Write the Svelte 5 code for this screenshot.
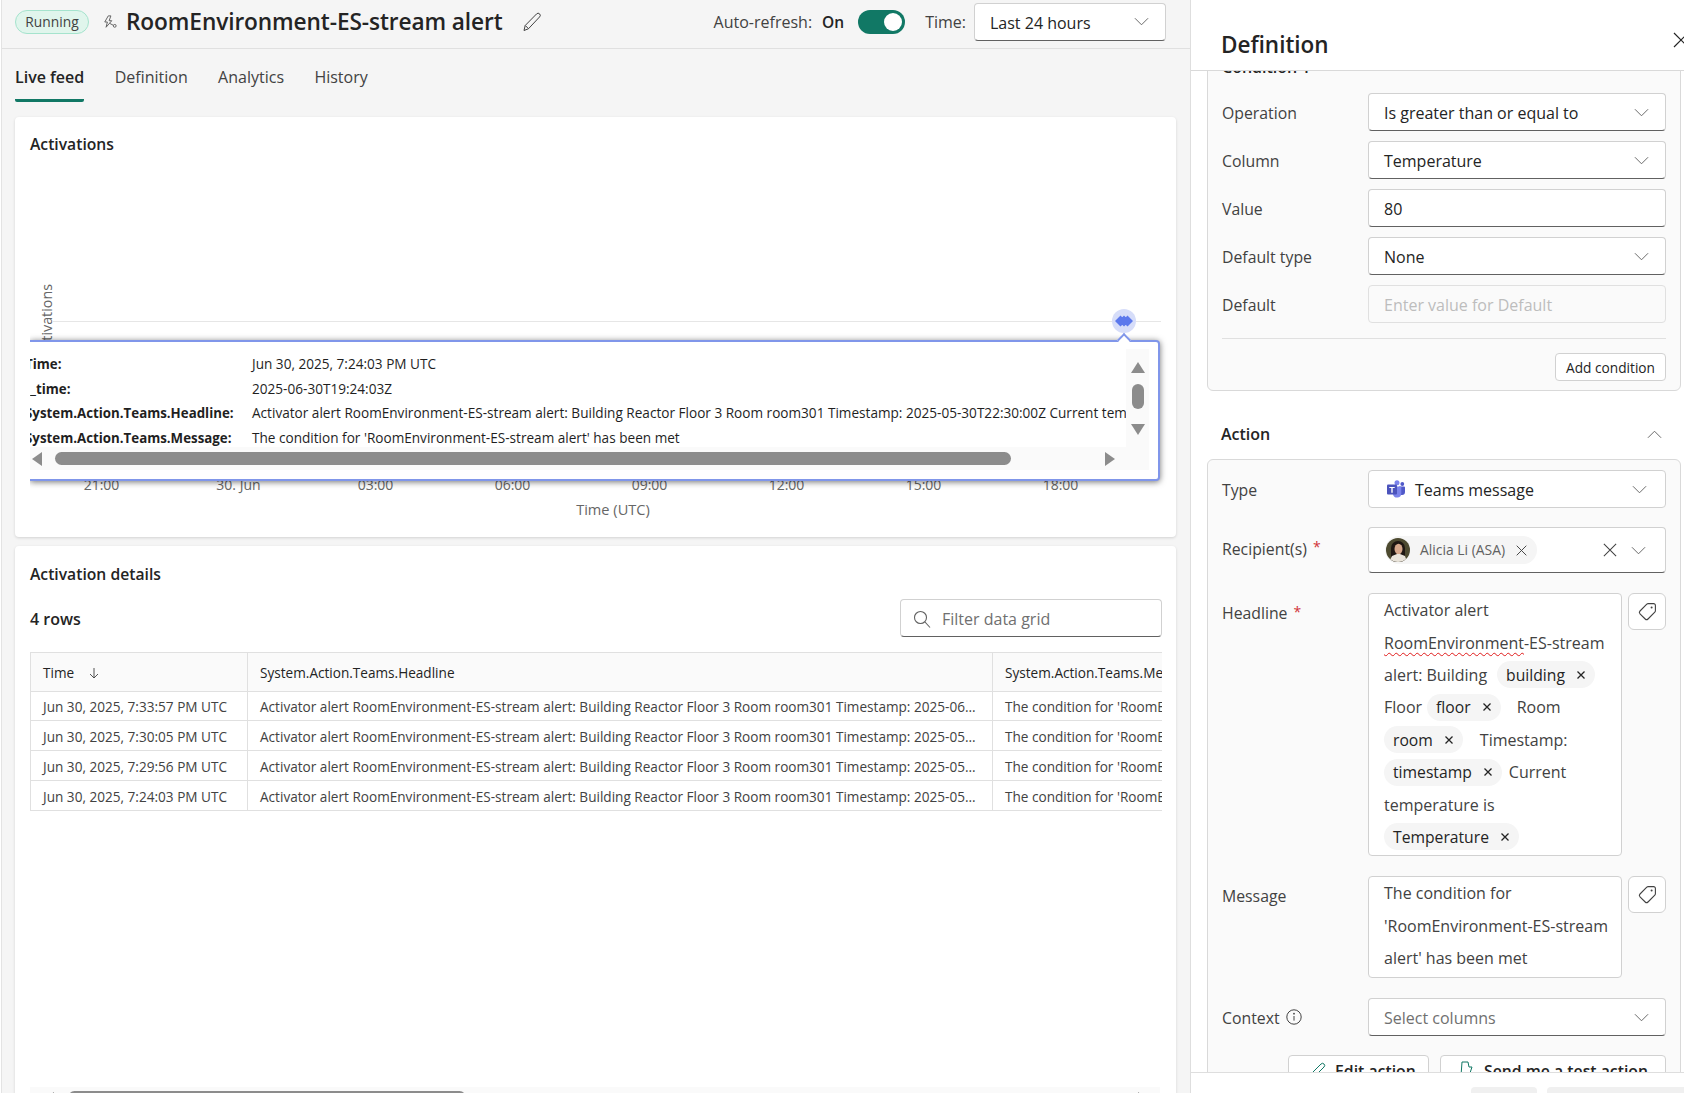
<script>
  const ticks = ['21:00', '30. Jun', '03:00', '06:00', '09:00', '12:00', '15:00', '18:00'];
  const tipRows = [
    ['Time:', 'Jun 30, 2025, 7:24:03 PM UTC'],
    ['__time:', '2025-06-30T19:24:03Z'],
    ['System.Action.Teams.Headline:', 'Activator alert RoomEnvironment-ES-stream alert: Building Reactor Floor 3 Room room301 Timestamp: 2025-05-30T22:30:00Z Current temperature is 82'],
    ['System.Action.Teams.Message:', "The condition for 'RoomEnvironment-ES-stream alert' has been met"]
  ];
  const prefix = 'Activator alert RoomEnvironment-ES-stream alert: Building Reactor Floor 3 Room room301 Timestamp: ';
  const rows = [
    ['Jun 30, 2025, 7:33:57 PM UTC', '2025-06...'],
    ['Jun 30, 2025, 7:30:05 PM UTC', '2025-05...'],
    ['Jun 30, 2025, 7:29:56 PM UTC', '2025-05...'],
    ['Jun 30, 2025, 7:24:03 PM UTC', '2025-05...']
  ];
</script>

{#snippet chevron()}
  <svg class="chev" viewBox="0 0 16 9" aria-hidden="true"><path d="M1 1l7 7 7-7" /></svg>
{/snippet}

{#snippet tag()}
  <button class="tagbtn" aria-label="Tag">
    <svg viewBox="0 0 20 20" aria-hidden="true">
      <path d="M11.2 1.6h5.4a1.8 1.8 0 0 1 1.8 1.8v5.4a2 2 0 0 1-.6 1.4l-6.8 6.8a2 2 0 0 1-2.8 0l-5.2-5.2a2 2 0 0 1 0-2.8l6.8-6.8a2 2 0 0 1 1.4-.6z" />
      <circle cx="14.6" cy="5.4" r="1" />
    </svg>
  </button>
{/snippet}

{#snippet x(cls)}
  <svg class={cls} viewBox="0 0 16 16" aria-hidden="true"><path d="M1 1l14 14M15 1L1 15" /></svg>
{/snippet}

{#snippet chip(name)}
  <span class="chip">{name}{@render x('chipx')}</span>
{/snippet}

<div class="page">
  <main class="main">
    <header class="head">
      <span class="pill">Running</span>
      <svg class="rule" viewBox="0 0 16 16" aria-hidden="true">
        <path d="M6 1L2 8h3L3.5 14 10 6.5H7L9 1z" />
        <circle cx="13.4" cy="12.4" r="1.6" />
        <path d="M7.5 9.5l4.4 2.3" />
      </svg>
      <h1>RoomEnvironment-ES-stream alert</h1>
      <svg class="pencil" viewBox="0 0 20 20" aria-hidden="true">
        <path d="M2 18.5l1.2-5L14.6 1.9a2.1 2.1 0 0 1 3 0 2.1 2.1 0 0 1 0 3L6.4 16.8z" />
        <path d="M3.4 13.6l3 3" />
      </svg>
      <div class="spacer"></div>
      <span class="hlabel">Auto-refresh:</span>
      <span class="on">On</span>
      <span class="toggle"><span class="knob"></span></span>
      <span class="hlabel time">Time:</span>
      <div class="field timepick"><span>Last 24 hours</span>{@render chevron()}</div>
    </header>

    <nav class="tabs">
      <span class="tab active">Live feed</span>
      <span class="tab">Definition</span>
      <span class="tab">Analytics</span>
      <span class="tab">History</span>
    </nav>

    <section class="card activations">
      <h2>Activations</h2>
      <span class="ylabel">Activations</span>
      <div class="gridline"></div>
      <div class="ticks">
        {#each ticks as t}<span>{t}</span>{/each}
      </div>
      <span class="xlabel">Time (UTC)</span>
      <div class="tip">
        <div class="tip-grid">
          <div class="tip-content">
            {#each tipRows as r}
              <div class="tip-row"><b>{r[0]}</b><span>{r[1]}</span></div>
            {/each}
          </div>
          <div class="vbar">
            <i class="tri up"></i>
            <i class="vthumb"></i>
            <i class="tri down"></i>
          </div>
          <div class="hbar">
            <i class="tri left"></i>
            <i class="hthumb"></i>
            <i class="tri right"></i>
          </div>
        </div>
      </div>
      <i class="tip-arrow"></i>
      <svg class="marker" viewBox="0 0 24 24" aria-hidden="true">
        <circle cx="12" cy="12" r="12" fill="#d6ddf9" />
        <path d="M3 12l5.5-5.5L14 12l-5.5 5.5zM6.5 12L12 6.5l5.5 5.5-5.5 5.5zM10 12l5.5-5.5L21 12l-5.5 5.5z" fill="#5b78ec" />
      </svg>
    </section>

    <section class="card details">
      <h2>Activation details</h2>
      <div class="toolbar">
        <span class="count">4 rows</span>
        <div class="filter">
          <svg viewBox="0 0 18 18" aria-hidden="true"><circle cx="7.5" cy="7.5" r="6" /><path d="M12 12l5 5.5" /></svg>
          <span>Filter data grid</span>
        </div>
      </div>
      <div class="table">
        <div class="tr thead">
          <div class="td">Time <svg class="sort" viewBox="0 0 12 12" aria-hidden="true"><path d="M6 1v10M2 7l4 4 4-4" /></svg></div>
          <div class="td">System.Action.Teams.Headline</div>
          <div class="td">System.Action.Teams.Message</div>
        </div>
        {#each rows as r}
          <div class="tr">
            <div class="td">{r[0]}</div>
            <div class="td">{prefix}{r[1]}</div>
            <div class="td">The condition for 'RoomEnvironment-ES-stream alert' has been met</div>
          </div>
        {/each}
      </div>
      <div class="bottombar"><i class="tri left small"></i><i class="bthumb"></i><i class="tri right small"></i></div>
    </section>
  </main>

  <aside class="panel">
    <div class="phead">
      <h2>Definition</h2>
      {@render x('pclose')}
    </div>
    <div class="pscroll">
      <div class="pinner">
        <section class="pcard cond">
          <div class="condlabel">Condition 1</div>
          <div class="rows">
            <div class="row"><label>Operation</label><div class="field"><span>Is greater than or equal to</span>{@render chevron()}</div></div>
            <div class="row"><label>Column</label><div class="field"><span>Temperature</span>{@render chevron()}</div></div>
            <div class="row"><label>Value</label><div class="field"><span>80</span></div></div>
            <div class="row"><label>Default type</label><div class="field"><span>None</span>{@render chevron()}</div></div>
            <div class="row"><label>Default</label><div class="field disabled"><span>Enter value for Default</span></div></div>
          </div>
          <div class="sep"></div>
          <div class="addrow"><button class="add">Add condition</button></div>
        </section>

        <div class="acthead">
          <h3>Action</h3>
          <svg class="chev" viewBox="0 0 16 9" aria-hidden="true"><path d="M1 8l7-7 7 7" /></svg>
        </div>

        <section class="pcard action">
          <div class="row"><label>Type</label>
            <div class="field flat">
              <svg class="teams" viewBox="0 0 18 18" aria-hidden="true">
                <circle cx="10" cy="2.8" r="2.5" fill="#7b83eb" />
                <circle cx="15.3" cy="4" r="1.9" fill="#5059c9" />
                <path d="M12 6.5h5a1 1 0 0 1 1 1v4.6a3 3 0 0 1-3 3h-3z" fill="#5059c9" />
                <path d="M6 6.5h7.5a.8.8 0 0 1 .8.8v6.4a4.2 4.2 0 0 1-8.3.5z" fill="#7b83eb" />
                <rect x="0" y="4.6" width="10" height="10" rx="1" fill="#4b53bc" />
                <path d="M2.3 6.9h5.4v1.2h-2v4.6H4.3V8.1h-2z" fill="#fff" />
              </svg>
              <span class="teamstext">Teams message</span>{@render chevron()}
            </div>
          </div>
          <div class="row recip"><label>Recipient(s)<em>*</em></label>
            <div class="field tall">
              <span class="person">
                <svg class="avatar" viewBox="0 0 24 24" aria-hidden="true">
                  <defs><clipPath id="av"><circle cx="12" cy="12" r="12" /></clipPath></defs>
                  <g clip-path="url(#av)">
                    <rect width="24" height="24" fill="#4d4a30" />
                    <path d="M5 24V10a7 7 0 0 1 14 0v14z" fill="#1f1712" />
                    <ellipse cx="12.5" cy="11" rx="4" ry="5.2" fill="#d6a88c" />
                    <path d="M3 24l3-6 5-2h3l5 2 2 6z" fill="#e9e4da" />
                  </g>
                </svg>
                <span>Alicia Li (ASA)</span>
                {@render x('personx')}
              </span>
              {@render x('clear')}
              {@render chevron()}
            </div>
          </div>
          <div class="row"><label>Headline<em>*</em></label>
            <div class="rich headline">
              <div class="line">Activator alert</div>
              <div class="line"><span class="squig">RoomEnvironment</span>-ES-stream</div>
              <div class="line">alert: Building<span class="g10"></span>{@render chip('building')}</div>
              <div class="line">Floor<span class="g5"></span>{@render chip('floor')}<span class="g16"></span>Room</div>
              <div class="line">{@render chip('room')}<span class="g17"></span>Timestamp:</div>
              <div class="line">{@render chip('timestamp')}<span class="g7"></span>Current</div>
              <div class="line">temperature is</div>
              <div class="line">{@render chip('Temperature')}</div>
            </div>
            {@render tag()}
          </div>
          <div class="row"><label class="msg">Message</label>
            <div class="rich message">
              <div class="line">The condition for</div>
              <div class="line">'RoomEnvironment-ES-stream</div>
              <div class="line">alert' has been met</div>
            </div>
            {@render tag()}
          </div>
          <div class="row"><label>Context
            <svg class="info" viewBox="0 0 16 16" aria-hidden="true"><circle cx="8" cy="8" r="7.2" /><path d="M8 7v4.6" /><circle class="dot" cx="8" cy="4.7" r=".9" /></svg></label>
            <div class="field"><span class="ph">Select columns</span>{@render chevron()}</div>
          </div>
          <div class="btns">
            <button class="ghost edit">
              <svg viewBox="0 0 16 16" aria-hidden="true"><path d="M2 15l1-4 8-8a2 2 0 0 1 3 3l-8 8z" /></svg>
              Edit action
            </button>
            <button class="ghost send">
              <svg viewBox="0 0 16 16" aria-hidden="true"><path d="M3 1h6l1 5h3l-3 9H2z" /></svg>
              Send me a test action
            </button>
          </div>
        </section>
      </div>
    </div>
    <footer class="pfoot"><button class="fb one" aria-label="Action"></button><button class="fb two" aria-label="Action"></button></footer>
  </aside>
</div>

<style>
  :global(body) { margin: 0; background: #fff; }
  * { box-sizing: border-box; }
  .page {
    display: grid; grid-template-columns: 1190px 494px; width: 1684px; height: 1093px; overflow: hidden;
    font-family: "Open Sans", "Noto Sans", sans-serif; color: #242424; font-size: 16px;
  }
  h1, h2, h3 { margin: 0; }
  i { display: block; }

  .main {
    background: #f5f5f5; border-left: 1px solid #e3e3e3; margin-left: 1px; height: 1093px; overflow: hidden;
    display: flex; flex-direction: column;
  }
  .head {
    height: 49px; flex: none; display: flex; align-items: center; padding: 0 24px 5px 13px;
    border-bottom: 1px solid #e0e0e0;
  }
  .pill {
    width: 74px; height: 24px; border-radius: 12px; background: #e0f5ec; border: 1px solid #a5e3cd;
    font-size: 13.8px; color: #424242; display: flex; align-items: center; justify-content: center; flex: none;
  }
  .rule { width: 14px; height: 14px; margin-left: 14px; fill: none; stroke: #616161; stroke-width: 1.1; flex: none; }
  h1 { font-size: 22.66px; font-weight: 600; margin-left: 9px; white-space: nowrap; letter-spacing: -.1px; }
  .pencil { width: 20px; height: 20px; margin-left: 19px; fill: none; stroke: #424242; stroke-width: 1; flex: none; }
  .spacer { flex: 1; }
  .hlabel { font-size: 16px; color: #424242; white-space: nowrap; padding-top: 1px; }
  .on { font-size: 15.5px; font-weight: 600; margin-left: 10px; padding-top: 1px; }
  .toggle { width: 47px; height: 24px; border-radius: 12px; background: #117865; margin-left: 14px; padding: 3px 3px 3px 26px; flex: none; }
  .knob { display: block; width: 18px; height: 18px; border-radius: 50%; background: #fff; }
  .time { margin-left: 20px; margin-right: 8px; }

  .field {
    width: 298px; height: 38px; flex: none; background: #fff; border: 1px solid #d1d1d1; border-bottom-color: #616161;
    border-radius: 4px; display: flex; align-items: center; padding: 2px 16px 0 15px; font-size: 16px; color: #242424; white-space: nowrap;
  }
  .field > span:first-child { flex: 1; }
  .field > span.person:first-child { flex: none; }
  .timepick { width: 192px; }
  .chev { width: 15px; height: 9px; fill: none; stroke: #616161; stroke-width: 1; flex: none; }
  .field .chev { margin-top: -2px; }
  .flat { border-bottom-color: #d1d1d1; padding-right: 18px; }
  .disabled { background: #fafafa; border-color: #e0e0e0; color: #bdbdbd; }
  .tall { height: 46px; padding-left: 16px; padding-top: 0; }
  .tall .chev { margin-top: 0; }
  .ph { color: #707070; }

  .tabs { height: 53px; flex: none; display: flex; gap: 30.4px; padding-left: 13px; margin-bottom: 15px; }
  .tab { height: 53px; padding-top: 18px; font-size: 16px; color: #424242; line-height: 21px; }
  .active { color: #242424; font-weight: 600; border-bottom: 3px solid #117865; border-radius: 0 0 2px 2px; }

  .card {
    margin: 0 14px 9px 13px; background: #fff; border-radius: 4px; box-shadow: 0 1px 3px rgba(0,0,0,.14); position: relative; flex: none;
  }
  .card h2 { font-size: 15.7px; font-weight: 600; line-height: 22px; }
  .activations { height: 420px; padding: 16px 15px; }
  .ylabel {
    position: absolute; left: 22px; top: 166.5px; writing-mode: vertical-rl; transform: rotate(180deg);
    font-size: 14.3px; color: #666; line-height: 20px;
  }
  .gridline { position: absolute; left: 38px; top: 204px; width: 1108px; height: 1px; background: #e6e6e6; }
  .ticks { position: absolute; left: 18px; top: 359px; display: flex; }
  .ticks span { width: 137px; text-align: center; font-size: 14px; color: #666; line-height: 18px; }
  .xlabel { position: absolute; left: 540px; top: 382px; width: 116px; text-align: center; font-size: 14.6px; color: #666; line-height: 20px; white-space: nowrap; }
  .tip {
    position: absolute; left: 15px; top: 222.5px; width: 1130px; height: 141px; background: #fff;
    border: 2px solid #8096ea; border-left: 0; border-radius: 0 4px 4px 0; box-shadow: 0 1px 6px rgba(0,0,0,.55);
    clip-path: inset(-12px -12px -12px 0); padding: 7.5px 9px 7px 0;
  }
  .tip-grid { display: grid; grid-template-columns: 1096px 23px; grid-template-rows: 98px 23px; }
  .tip-content { overflow: hidden; padding-top: 3px; }
  .tip-row { display: flex; height: 24.6px; line-height: 24.6px; font-size: 13.6px; margin-left: -5px; white-space: nowrap; color: #1f1f1f; }
  .tip-row b { width: 227px; flex: none; font-weight: 700; font-size: 13.3px; }
  .vbar { background: #fafafa; display: flex; flex-direction: column; align-items: center; padding-top: 13px; }
  .vthumb { width: 12px; height: 25px; border-radius: 6px; background: #8c8c8c; margin-top: 11px; }
  .hbar { grid-column: 1 / 3; background: #fafafa; position: relative; display: flex; align-items: center; padding-left: 2px; }
  .hthumb { width: 956px; height: 13px; border-radius: 7px; background: #8c8c8c; margin-left: 13px; }
  .tri { width: 0; height: 0; border-style: solid; border-color: transparent; }
  .up { border-width: 0 7px 11px; border-bottom-color: #8c8c8c; }
  .down { border-width: 11px 7px 0; border-top-color: #8c8c8c; margin-top: 15px; }
  .left { border-width: 7px 10px 7px 0; border-right-color: #8c8c8c; }
  .right { border-width: 7px 0 7px 10px; border-left-color: #8c8c8c; margin-left: 94px; }
  .tip-arrow {
    position: absolute; left: 1104px; top: 217.5px; width: 10px; height: 10px; background: #fff; transform: rotate(45deg);
    border-top: 2px solid #8096ea; border-left: 2px solid #8096ea;
  }
  .marker { position: absolute; left: 1097px; top: 192px; width: 24px; height: 24px; }

  .details { height: 560px; padding: 17px 14px 0 15px; }
  .toolbar { display: flex; justify-content: space-between; align-items: center; margin-top: 14px; height: 38px; }
  .count { font-size: 16px; font-weight: 600; padding-top: 2px; }
  .filter {
    width: 262px; height: 38px; border: 1px solid #d1d1d1; border-bottom-color: #616161; border-radius: 4px;
    display: flex; align-items: center; padding: 1px 0 0 12px; gap: 11px; color: #707070; font-size: 16px;
  }
  .filter svg { width: 18px; height: 18px; fill: none; stroke: #616161; stroke-width: 1.1; }
  .table { width: 1132px; margin-top: 15px; overflow: hidden; border-top: 1px solid #e0e0e0; border-left: 1px solid #e0e0e0; }
  .tr { display: grid; grid-template-columns: 217px 745px 400px; height: 29.75px; border-bottom: 1px solid #e0e0e0; }
  .thead { height: 38.5px; background: #fafafa; }
  .td { padding: 2px 12px 0; display: flex; align-items: center; font-size: 13.6px; color: #424242; white-space: nowrap; overflow: hidden; border-right: 1px solid #e0e0e0; }
  .thead .td { color: #242424; }
  .sort { width: 12px; height: 12px; margin-left: 14px; fill: none; stroke: #424242; stroke-width: .9; }
  .bottombar { position: absolute; left: 15px; top: 541px; width: 1130px; height: 19px; background: #fafafa; display: flex; padding-left: 17px; padding-top: 4px; }
  .bthumb { width: 398px; height: 13px; border-radius: 7px; background: #8c8c8c; margin-left: 14px; }
  .small.left { border-width: 5px 7px 5px 0; margin-top: 1px; }
  .small.right { border-width: 5px 0 5px 7px; margin-left: 672px; margin-top: 1px; }

  .panel { display: flex; flex-direction: column; height: 1093px; border-left: 1px solid #dedede; background: #fff; overflow: hidden; }
  .phead { height: 71px; flex: none; border-bottom: 1px solid #d9d9d9; position: relative; z-index: 1; background: #fff; display: flex; align-items: center; justify-content: space-between; padding: 18px 0 0 30px; }
  .phead h2 { font-size: 22.5px; font-weight: 600; }
  .pclose { width: 16px; height: 16px; fill: none; stroke: #242424; stroke-width: 1.2; margin-right: -5px; margin-top: -9px; flex: none; }
  .pscroll { flex: 1; overflow: hidden; min-height: 0; }
  .pinner { margin-top: -40px; padding: 0 3px 0 16px; }
  .pcard { background: #fafafa; border: 1px solid #d9d9d9; border-radius: 6px; width: 474px; padding: 0 14px; }
  .cond { height: 360px; padding-top: 25px; }
  .condlabel { font-size: 16px; font-weight: 600; line-height: 20px; margin-bottom: 16px; }
  .rows { display: flex; flex-direction: column; gap: 10px; }
  .row { display: flex; align-items: flex-start; }
  .row label { width: 146px; flex: none; font-size: 15.8px; color: #424242; height: 38px; padding-top: 2px; white-space: nowrap; display: flex; align-items: center; }
  .row label em { color: #d13438; font-style: normal; margin-left: 6px; font-size: 14px; margin-top: -4px; }
  .sep { height: 1px; background: #e0e0e0; margin-top: 15px; }
  .addrow { display: flex; justify-content: flex-end; margin-top: 14px; }
  .add { width: 111px; height: 28px; padding: 0; background: #fff; border: 1px solid #d1d1d1; border-radius: 4px; font: 13.7px "Open Sans", sans-serif; color: #242424; }
  .acthead { height: 68px; padding: 18px 19px 0 14px; display: flex; align-items: center; justify-content: space-between; }
  .acthead h3 { font-size: 16px; font-weight: 600; }
  .action { display: flex; flex-direction: column; gap: 20px; padding-top: 10px; height: 640px; }
  .recip { margin-top: -1px; }
  .recip label { height: 41px; }
  .teams { width: 18px; height: 18px; margin-right: 10px; margin-left: 3px; margin-top: -2px; flex: none; }
  .teamstext { flex: 1; }
  .person { display: flex; align-items: center; height: 28px; width: 152px; border-radius: 14px; background: #f5f5f5; font-size: 13.9px; color: #616161; flex: none; white-space: nowrap; }
  .avatar { width: 24px; height: 24px; margin-left: 1px; margin-right: 10px; flex: none; }
  .person span { flex: 1; margin-top: -1px; }
  .personx { width: 11px; height: 11px; fill: none; stroke: #424242; stroke-width: 1.4; margin-right: 10px; flex: none; }
  .clear { width: 14px; height: 14px; fill: none; stroke: #424242; stroke-width: 1.2; margin-left: 66px; margin-right: 14px; flex: none; }
  .rich { width: 254px; flex: none; background: #fff; border: 1px solid #d1d1d1; border-radius: 4px; padding: 0 0 2px 15px; }
  .message { padding-bottom: 3px; }
  .line { height: 32.4px; display: flex; align-items: center; font-size: 16px; color: #424242; white-space: nowrap; }
  .squig { text-decoration: underline wavy #e01b1b 1px; text-underline-offset: 3px; }
  .chip { display: inline-flex; align-items: center; height: 27px; border-radius: 14px; background: #f5f5f5; color: #242424; padding: 0 10px 0 9px; font-size: 15.7px; }
  .chipx { width: 8px; height: 8px; fill: none; stroke: #242424; stroke-width: 2.6; margin-left: 12px; flex: none; }
  .g5 { width: 5px; } .g7 { width: 7px; } .g10 { width: 10px; } .g16 { width: 16px; } .g17 { width: 17px; }
  .tagbtn { width: 38px; height: 37px; margin-left: 6px; background: #fff; border: 1px solid #d1d1d1; border-radius: 6px; padding: 0; display: flex; align-items: center; justify-content: center; flex: none; }
  .tagbtn svg { width: 20px; height: 20px; fill: none; stroke: #424242; stroke-width: 1.1; }
  .tagbtn circle { fill: #424242; stroke: none; }
  .info { width: 16px; height: 16px; margin-left: 6px; fill: none; stroke: #424242; stroke-width: 1; margin-top: -2px; }
  .info .dot { fill: #424242; stroke: none; }
  .btns { display: flex; justify-content: flex-end; gap: 11px; margin-top: -1px; }
  .ghost { height: 32px; background: #fff; border: 1px solid #d1d1d1; border-radius: 4px; font: 600 15.8px "Open Sans", sans-serif; color: #242424; display: flex; align-items: center; padding: 0; white-space: nowrap; }
  .ghost svg { width: 16px; height: 16px; fill: none; stroke: #117865; stroke-width: 1; flex: none; margin-top: -4px; }
  .edit { width: 141px; padding-left: 21px; gap: 9px; }
  .send { width: 226px; padding-left: 18px; gap: 9px; }
  .pfoot { height: 21px; flex: none; background: #fff; border-top: 1px solid #dedede; padding: 14px 0 0 280px; display: flex; gap: 10px; overflow: hidden; position: relative; z-index: 1; }
  .fb { height: 32px; border: 0; border-radius: 4px; background: #f0f0f0; flex: none; padding: 0; }
  .one { width: 66px; }
  .two { width: 150px; }
</style>
